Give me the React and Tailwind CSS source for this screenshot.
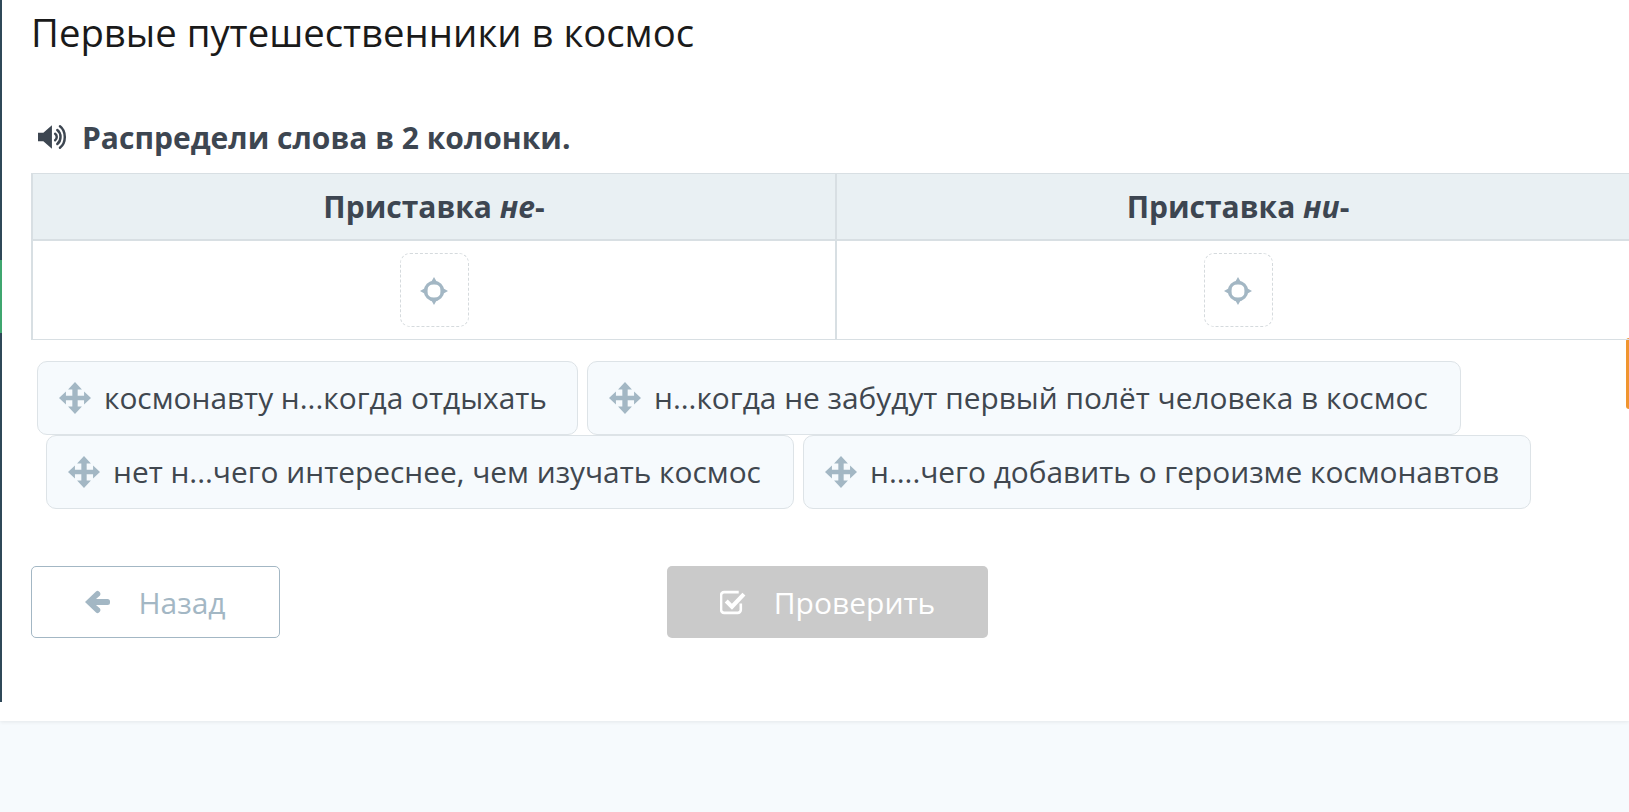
import React from "react";

const MoveIcon = () => (
  <svg viewBox="0 0 30 30" className="w-[32px] h-[32px] shrink-0 text-[#a3b7c4]" fill="currentColor">
    <path d="M15 0l6.500 7h-4v6h6V9L30 15l-6.500 6v-4h-6v6h4L15 30l-6.500-7h4v-6h-6v4L0 15l6.500-6v4h6V7h-4z" />
  </svg>
);

const DropIcon = () => (
  <svg viewBox="0 0 26 26" className="w-[28px] h-[28px] mt-[2px] text-[#a3b7c4]" fill="none">
    <circle cx="13" cy="13" r="8" stroke="currentColor" strokeWidth="3" />
    <path d="M13 0l4 7H9zM13 26l4-7H9zM0 13l7-4v8zM26 13l-7-4v8z" fill="currentColor" />
  </svg>
);

const SoundIcon = () => (
  <svg viewBox="0 0 28 24" className="w-[30px] h-[26px] shrink-0 text-[#3d4651]" fill="none">
    <path d="M0 8h5l8-7v22l-8-7H0z" fill="currentColor" />
    <path d="M16 9c2 1.500 2 4.500 0 6M18 5.500c4 3 4 10 0 13M20.500 2c6 4.500 6 15.500 0 20" stroke="currentColor" strokeWidth="2.300" strokeLinecap="round" />
  </svg>
);

const BackArrow = () => (
  <svg viewBox="0 0 25 24" className="w-[25px] h-[24px] shrink-0" fill="currentColor">
    <path d="M0 12L11 1.500q1.500-1.500 3 0l1 1q1 1.500 0 3L11 9h11.500q2.500 0 2.500 2.500v1q0 2.500-2.500 2.500H11l4 3.500q1 1.500 0 3l-1 1q-1.500 1.500-3 0z" />
  </svg>
);

const CheckBoxIcon = () => (
  <svg viewBox="0 0 25 24" className="w-[26px] h-[25px] shrink-0" fill="none">
    <path d="M20 13v6a3 3 0 0 1-3 3H4a3 3 0 0 1-3-3V5a3 3 0 0 1 3-3h14" stroke="currentColor" strokeWidth="2.500" />
    <path d="M6 10.500l5.500 5.500L23 4" stroke="currentColor" strokeWidth="4" />
  </svg>
);

const Chip = ({ text, className }) => (
  <div className={"flex items-center h-[74px] pl-[21px] bg-[#f6fafd] border border-[#dde3e7] rounded-[10px] " + className}>
    <MoveIcon />
    <span className="ml-[13px] pt-[1px] text-[29.85px] text-[#40474f] whitespace-nowrap">{text}</span>
  </div>
);

const DropCell = ({ border }) => (
  <div className={"flex-1 flex justify-center pt-[12px] " + border}>
    <div className="flex items-center justify-center w-[69px] h-[74px] border border-dashed border-[#d5dadd] rounded-[10px]">
      <DropIcon />
    </div>
  </div>
);

export default function App() {
  return (
    <div className="relative w-[1629px] h-[812px] overflow-hidden bg-white font-['Open_Sans',sans-serif]">
      <div className="absolute left-0 top-0 w-[2px] h-[702px] bg-[#2f4858]" />
      <div className="absolute left-0 top-[260px] w-[2px] h-[73px] bg-[#3fa66f]" />
      <div className="absolute right-0 top-[338px] w-[3px] h-[71px] rounded-l bg-[#f0952f]" />

      <div className="h-[721px] pl-[31px] shadow-[0_1px_4px_rgba(0,0,0,0.08)] relative">
        <h1 className="pt-[7px] text-[38.3px] leading-[50px] text-[#1a1a1a]">Первые путешественники в космос</h1>

        <div className="flex items-center mt-[58px] h-[44px] pl-[7px]">
          <SoundIcon />
          <span className="ml-[14px] text-[30px] font-bold text-[#3d4651]">Распредели слова в 2 колонки.</span>
        </div>

        <div className="mt-[14px] w-[1609px] border border-[#d8dfe3] border-l-2">
          <div className="flex h-[67px] bg-[#e9f0f3] border-b-2 border-[#d8dfe3]">
            <div className="flex-1 flex items-center justify-center border-r-2 border-[#d8dfe3] text-[30px] font-bold text-[#3d4651]">
              <span>Приставка <i>не</i>-</span>
            </div>
            <div className="flex-1 flex items-center justify-center text-[30px] font-bold text-[#3d4651]">
              <span>Приставка <i>ни</i>-</span>
            </div>
          </div>
          <div className="flex h-[98px]">
            <DropCell border="border-r-2 border-[#d8dfe3]" />
            <DropCell border="" />
          </div>
        </div>

        <div className="flex gap-[9px] mt-[21px] ml-[6px]">
          <Chip text="космонавту н...когда отдыхать" className="w-[541px]" />
          <Chip text="н...когда не забудут первый полёт человека в космос" className="w-[874px]" />
        </div>
        <div className="flex gap-[9px] ml-[15px]">
          <Chip text="нет н...чего интереснее, чем изучать космос" className="w-[748px]" />
          <Chip text="н....чего добавить о героизме космонавтов" className="w-[728px]" />
        </div>

        <div className="flex mt-[57px]">
          <button className="flex items-center justify-center w-[249px] h-[72px] border border-[#a3b7c4] rounded-[5px] text-[#a3b7c4] text-[30px]">
            <BackArrow />
            <span className="ml-[28px]">Назад</span>
          </button>
          <button className="flex items-center justify-center ml-[387px] w-[321px] h-[72px] rounded-[5px] bg-[#cacaca] text-white text-[30px]">
            <CheckBoxIcon />
            <span className="ml-[28px]">Проверить</span>
          </button>
        </div>
      </div>
      <div className="h-[91px] bg-[#f6fafd]" />
    </div>
  );
}
